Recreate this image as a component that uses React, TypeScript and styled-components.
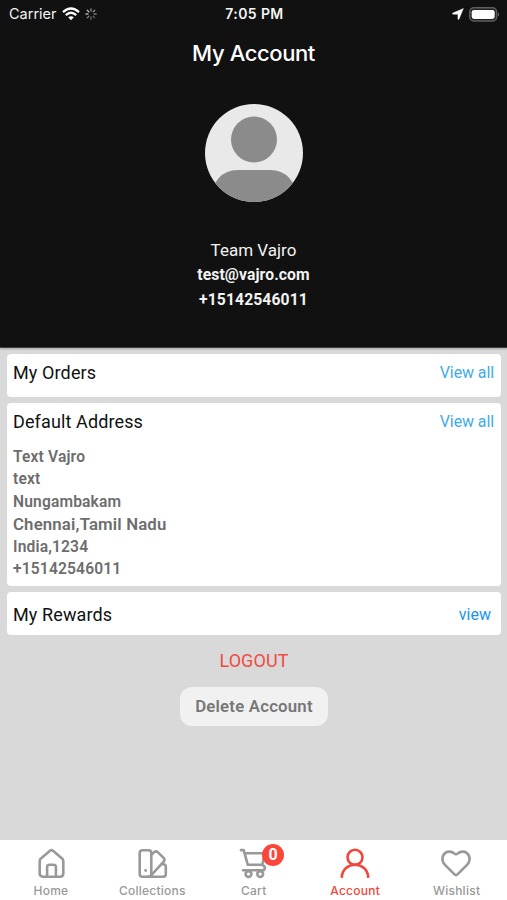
import React from "react";
import styled, { createGlobalStyle } from "styled-components";

const GlobalStyle = createGlobalStyle`
  * { box-sizing: border-box; }
  body { margin: 0; background: #d9d9d9; }
`;

const Screen = styled.div`
  width: 507px;
  height: 900px;
  display: flex;
  flex-direction: column;
  overflow: hidden;
  background: #d9d9d9;
  font-family: Roboto, "Liberation Sans", sans-serif;
  color: #111;
`;

const Header = styled.header`
  flex: none;
  height: 348px;
  display: flex;
  flex-direction: column;
  align-items: center;
  background: #111111;
  color: #fff;
  border-bottom: 1px solid #414141;
  box-shadow: 0 1px 2px rgba(0, 0, 0, 0.25);
`;

const StatusBar = styled.div`
  width: 100%;
  height: 28px;
  display: grid;
  grid-template-columns: 1fr auto 1fr;
  align-items: center;
  padding: 0 7px 0 9px;
  font-family: Inter, sans-serif;
  color: #f4f4f4;
`;

const StatusGroup = styled.div<{ $end?: boolean }>`
  display: flex;
  align-items: center;
  justify-content: ${(p) => (p.$end ? "flex-end" : "flex-start")};
  gap: 5px;
`;

const Carrier = styled.span`
  font-size: 14.5px;
  line-height: 28px;
  letter-spacing: 0;
`;

const Clock = styled.span`
  font-size: 14px;
  font-weight: 600;
  line-height: 28px;
  letter-spacing: 0.4px;
`;

const Title = styled.h1`
  margin: 12px 0 0;
  font-family: Inter, sans-serif;
  font-size: 22px;
  font-weight: 500;
  line-height: 26px;
  letter-spacing: -0.4px;
`;

const Avatar = styled.svg`
  display: block;
  margin: 38px 0 36px;
`;

const Contact = styled.div<{ $bold?: boolean }>`
  height: 24.4px;
  line-height: ${(p) => (p.$bold ? "26px" : "24.4px")};
  font-size: ${(p) => (p.$bold ? "15.7px" : "17px")};
  font-weight: ${(p) => (p.$bold ? 700 : 400)};
  letter-spacing: ${(p) => (p.$bold ? "0.1px" : "0")};
  color: #f2f2f2;
`;

const Content = styled.main`
  flex: 1;
  display: flex;
  flex-direction: column;
  gap: 6px;
  padding: 6px 6px 0 7px;
`;

const Card = styled.section<{ $height: number }>`
  flex: none;
  height: ${(p) => p.$height}px;
  padding: 0 7px 0 6px;
  background: #fff;
  border-radius: 4px;
`;

const CardHead = styled.div<{ $height?: number }>`
  height: ${(p) => p.$height ?? 36}px;
  display: flex;
  align-items: center;
  justify-content: space-between;
`;

const CardTitle = styled.h2`
  margin: 0;
  font-size: 18px;
  font-weight: 400;
  letter-spacing: 0.12px;
  color: #111;
`;

const Link = styled.a<{ $vivid?: boolean }>`
  font-size: 16px;
  letter-spacing: ${(p) => (p.$vivid ? "0" : "-0.1px")};
  margin-right: ${(p) => (p.$vivid ? "3px" : "0")};
  color: ${(p) => (p.$vivid ? "#1b94ee" : "#3fabea")};
`;

const Address = styled.address`
  padding-top: 7px;
  font-style: normal;
  color: #6d6d6d;
`;

const AddressLine = styled.div<{ $large?: boolean }>`
  height: 22.4px;
  line-height: ${(p) => (p.$large ? "23.4px" : "22.4px")};
  font-size: ${(p) => (p.$large ? "16.8px" : "15.6px")};
  font-weight: 600;
  letter-spacing: 0.15px;
`;

const Logout = styled.button`
  align-self: center;
  margin: 7px 0 0;
  padding: 0;
  height: 26px;
  border: 0;
  background: none;
  font: 400 18px/26px Roboto, sans-serif;
  letter-spacing: 0.1px;
  color: #f04b43;
`;

const DeleteButton = styled.button`
  align-self: center;
  width: 148px;
  height: 39px;
  margin-top: 7px;
  padding: 0;
  border: 0;
  border-radius: 12px;
  background: #f1f1f1;
  font: 600 16.8px/39px Roboto, sans-serif;
  letter-spacing: 0.2px;
  color: #777;
`;

const TabBar = styled.nav`
  flex: none;
  height: 60px;
  display: grid;
  grid-template-columns: repeat(5, 1fr);
  background: #fff;
`;

const Tab = styled.div<{ $active?: boolean }>`
  display: flex;
  flex-direction: column;
  align-items: center;
  padding-top: 7px;
  color: ${(p) => (p.$active ? "#f4453c" : "#999")};
`;

const TabIcon = styled.div`
  position: relative;
  height: 33px;
`;

const TabLabel = styled.span`
  margin-top: 3px;
  padding-left: 0.5px;
  font: 500 12px/16px Inter, sans-serif;
  letter-spacing: 0.25px;
`;

const Badge = styled.span`
  position: absolute;
  top: -3.5px;
  left: 24.7px;
  width: 22px;
  height: 22px;
  border-radius: 50%;
  background: #fb463c;
  color: #fff;
  font: 700 16px/22px Roboto, sans-serif;
  text-align: center;
`;

const Drawing = styled.svg`
  display: block;
  fill: none;
  stroke: currentColor;
  stroke-width: 2.6;
  stroke-linecap: round;
  stroke-linejoin: round;
`;

const WifiIcon = () => (
  <svg width="18" height="14" viewBox="0 0 18 14" fill="none" stroke="#fff" strokeWidth="2.3">
    <path d="M1 5.1Q9-2.2 17 5.1M3.8 8.1Q9 3.5 14.2 8.1" />
    <path d="M6.2 10.3Q9 8.1 11.8 10.3L9 13.2Z" fill="#fff" stroke="none" />
  </svg>
);

const Spinner = () => (
  <svg width="12" height="12" viewBox="-6 -6 12 12" strokeWidth="1.3" strokeLinecap="round">
    {[0.6, 0.65, 0.5, 0.4, 0.45, 0.6, 0.75, 0.9].map((opacity, i) => (
      <path key={i} d="M0-3V-5.2" stroke="#ddd" opacity={opacity} transform={`rotate(${i * 45})`} />
    ))}
  </svg>
);

const LocationArrow = () => (
  <svg width="12" height="12" viewBox="0 0 12 12">
    <path d="M11.4.5 7 11.2Q6.2 12 5.9 11V6.2H1Q-.1 5.8.8 5Z" fill="#fff" stroke="#fff" strokeWidth=".4" />
  </svg>
);

const Battery = () => (
  <svg width="31" height="15" viewBox="0 0 31 15">
    <rect x=".8" y=".8" width="26.8" height="13.2" rx="4" fill="#222" stroke="#5f5f5f" strokeWidth="1.5" />
    <rect x="2.7" y="2.9" width="23" height="9" rx="2.3" fill="#fff" />
    <path d="M29 5.2q2 2.1 0 4.4Z" fill="#777" />
  </svg>
);

const HomeIcon = () => (
  <Drawing width="32" height="33" viewBox="0 0 32 33">
    <path d="M4.7 14.2Q4.7 12.6 5.9 11.6L15 3.8Q16.5 2.6 18 3.8L27.1 11.6Q28.3 12.6 28.3 14.2V26.6Q28.3 29.7 25.2 29.7H7.8Q4.7 29.7 4.7 26.6Z" />
    <path d="M12.1 29.7V20.2Q12.1 17.8 14.5 17.8H18.5Q20.9 17.8 20.9 20.2V29.7" />
  </Drawing>
);

const CollectionsIcon = () => (
  <Drawing width="32" height="33" viewBox="0 0 32 33">
    <rect x="3.7" y="3.2" width="11.6" height="26.5" rx="2.8" />
    <path d="M15.3 7.8 18.1 5.2Q20.1 3.6 22 5.4L27.6 10.9Q29.3 12.7 27.7 14.7L15.3 28.2M25.8 17.3H27.1Q29.8 17.3 29.8 20V27Q29.8 29.7 27.1 29.7H11" />
    <circle cx="9.6" cy="23.5" r="1.4" fill="currentColor" stroke="none" />
  </Drawing>
);

const CartIcon = () => (
  <Drawing width="32" height="33" viewBox="0 0 32 33">
    <path d="M3.9 3.1H6.7L10.8 17.8H25.3L28 6.3H7.7M25.3 17.8Q29.7 20.2 26.6 23.3H6" />
    <circle cx="11.5" cy="27" r="2.9" />
    <circle cx="23.2" cy="27" r="2.9" />
  </Drawing>
);

const AccountIcon = () => (
  <Drawing width="32" height="33" viewBox="0 0 32 33">
    <circle cx="16" cy="10.3" r="7.5" />
    <path d="M2.8 29.8C3.5 22.5 9 17.8 16 17.8S28.5 22.5 29.2 29.8" />
  </Drawing>
);

const HeartIcon = () => (
  <Drawing width="32" height="33" viewBox="0 0 32 33">
    <path d="M16 28.1Q15.2 28.1 14.3 27.2L5.2 18.1C-.3 12.5 3.2 4.6 9.3 4.6Q12.4 4.6 14.5 6.6Q16 8 17.5 6.6Q19.6 4.6 22.7 4.6C28.8 4.6 32.3 12.5 26.8 18.1L17.7 27.2Q16.8 28.1 16 28.1Z" />
  </Drawing>
);

const tabs = [
  { label: "Home", Icon: HomeIcon },
  { label: "Collections", Icon: CollectionsIcon },
  { label: "Cart", Icon: CartIcon, badge: "0" },
  { label: "Account", Icon: AccountIcon, active: true },
  { label: "Wishlist", Icon: HeartIcon },
];

const address = ["Text Vajro", "text", "Nungambakam", "Chennai,Tamil Nadu", "India,1234", "+15142546011"];

export default function App() {
  return (
    <Screen>
      <GlobalStyle />
      <Header>
        <StatusBar>
          <StatusGroup>
            <Carrier>Carrier</Carrier>
            <WifiIcon />
            <Spinner />
          </StatusGroup>
          <Clock>7:05 PM</Clock>
          <StatusGroup $end>
            <LocationArrow />
            <Battery />
          </StatusGroup>
        </StatusBar>
        <Title>My Account</Title>
        <Avatar width="98" height="98" viewBox="0 0 98 98">
          <defs>
            <clipPath id="avatar-circle"><circle cx="49" cy="49" r="49" /></clipPath>
          </defs>
          <g clipPath="url(#avatar-circle)">
            <rect width="98" height="98" fill="#e9e9e9" />
            <circle cx="49" cy="35.5" r="23" fill="#8b8b8b" />
            <path d="M4 98Q9 66 33 66H65Q89 66 94 98Z" fill="#8b8b8b" />
          </g>
        </Avatar>
        <Contact>Team Vajro</Contact>
        <Contact $bold>test@vajro.com</Contact>
        <Contact $bold>+15142546011</Contact>
      </Header>
      <Content>
        <Card $height={43}>
          <CardHead>
            <CardTitle>My Orders</CardTitle>
            <Link>View all</Link>
          </CardHead>
        </Card>
        <Card $height={183}>
          <CardHead>
            <CardTitle>Default Address</CardTitle>
            <Link>View all</Link>
          </CardHead>
          <Address>
            {address.map((line, i) => (
              <AddressLine key={line} $large={i === 3}>{line}</AddressLine>
            ))}
          </Address>
        </Card>
        <Card $height={43}>
          <CardHead $height={44}>
            <CardTitle>My Rewards</CardTitle>
            <Link $vivid>view</Link>
          </CardHead>
        </Card>
        <Logout>LOGOUT</Logout>
        <DeleteButton>Delete Account</DeleteButton>
      </Content>
      <TabBar>
        {tabs.map(({ label, Icon, badge, active }) => (
          <Tab key={label} $active={active}>
            <TabIcon>
              <Icon />
              {badge && <Badge>{badge}</Badge>}
            </TabIcon>
            <TabLabel>{label}</TabLabel>
          </Tab>
        ))}
      </TabBar>
    </Screen>
  );
}
